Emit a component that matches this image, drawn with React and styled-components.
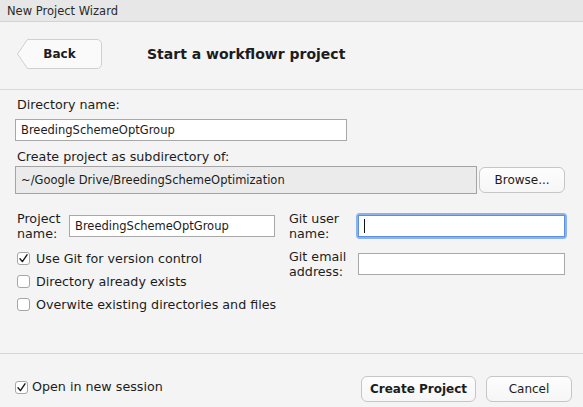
import React from 'react';
import styled, { createGlobalStyle } from 'styled-components';

const GlobalStyle = createGlobalStyle`
  html, body {
    margin: 0;
    padding: 0;
    background: #f4f4f4;
  }
  * {
    box-sizing: border-box;
  }
`;

const Window = styled.div`
  width: 583px;
  height: 407px;
  display: flex;
  flex-direction: column;
  background: #f4f4f4;
  color: #1c1c1c;
  font-family: "DejaVu Sans", "Liberation Sans", sans-serif;
  font-size: 12.7px;
  overflow: hidden;
`;

const TitleBar = styled.div`
  height: 22px;
  flex: none;
  display: flex;
  align-items: center;
  padding-left: 7px;
  background: #e7e7e7;
  border-bottom: 1px solid #d2d2d2;
  font-size: 11.5px;
  color: #2a2a2a;
`;

const Header = styled.div`
  height: 68px;
  flex: none;
  display: flex;
  align-items: flex-start;
  padding: 17px 0 0 17px;
  border-bottom: 1px solid #dadada;
`;

const BackButton = styled.button`
  position: relative;
  width: 85px;
  height: 30px;
  padding: 0;
  border: none;
  background: transparent;
  font-family: inherit;
  font-size: 12px;
  font-weight: bold;
  color: #1c1c1c;
  cursor: pointer;

  svg {
    position: absolute;
    left: 0;
    top: 0;
  }

  span {
    position: relative;
  }
`;

const Title = styled.h1`
  margin: 0 0 0 45px;
  height: 30px;
  display: flex;
  align-items: center;
  font-size: 14px;
  font-weight: bold;
`;

const Body = styled.div`
  flex: 1;
  display: flex;
  flex-direction: column;
  padding: 0 18px 0 15px;
`;

const Label = styled.div`
  line-height: 16px;
  padding-left: 2px;
  margin-top: ${({ $top }) => $top || 0}px;
`;

const TextInput = styled.input`
  display: block;
  width: ${({ $w }) => $w}px;
  height: 22px;
  margin-top: ${({ $top }) => $top || 0}px;
  padding: 0 5px;
  border: 1px solid ${({ $focus }) => ($focus ? '#5b8fdf' : '#a8a8a8')};
  border-radius: 0;
  background: #fff;
  font-family: inherit;
  font-size: 11.5px;
  color: #1c1c1c;
  outline: none;
`;

const PathRow = styled.div`
  display: flex;
  align-items: center;
  gap: 2px;
  margin-top: 1px;
`;

const PathField = styled.div`
  width: 463px;
  height: 28px;
  display: flex;
  align-items: center;
  padding-left: 5px;
  border: 1px solid #a4a4a4;
  background: #ebebeb;
  font-size: 11.5px;
`;

const PushButton = styled.button`
  width: ${({ $w }) => $w}px;
  height: ${({ $h }) => $h || 26}px;
  padding: 0;
  border: 1px solid #c6c6c6;
  border-radius: 6px;
  background: linear-gradient(#fdfdfd, #f6f6f6);
  font-family: inherit;
  font-size: 12px;
  font-weight: ${({ $bold }) => ($bold ? 'bold' : 'normal')};
  color: #1c1c1c;
  cursor: pointer;
`;

const Columns = styled.div`
  display: grid;
  grid-template-columns: 264px 276px;
  column-gap: 10px;
  margin-top: 20px;
`;

const Column = styled.div`
  display: flex;
  flex-direction: column;
`;

const FieldRow = styled.div`
  display: flex;
  align-items: center;
  height: 24px;
  margin-bottom: ${({ $gap }) => $gap || 0}px;
`;

const FieldLabel = styled.div`
  width: ${({ $w }) => $w}px;
  flex: none;
  line-height: 15px;
  padding-left: ${({ $pad }) => $pad || 0}px;
`;

const FocusWrap = styled.div`
  position: relative;
  border-radius: 2px;
  box-shadow: 0 0 0 2px rgba(104, 156, 232, 0.75);
`;

const Caret = styled.span`
  position: absolute;
  left: 6px;
  top: 4px;
  width: 1px;
  height: 14px;
  background: #111;
`;

const CheckRow = styled.label`
  display: flex;
  align-items: center;
  height: 23px;
  padding-left: 2px;
  gap: 6px;
  line-height: 16px;
`;

const Box = styled.span`
  width: 13px;
  height: 13px;
  flex: none;
  display: flex;
  align-items: center;
  justify-content: center;
  border: 1px solid #a6a6a6;
  border-radius: 3px;
  background: #fff;
`;

const Footer = styled.div`
  height: 54px;
  flex: none;
  display: flex;
  align-items: flex-start;
  justify-content: space-between;
  padding: 22px 11px 0 13px;
  border-top: 1px solid #d6d6d6;
`;

const FooterCheck = styled(CheckRow)`
  height: 16px;
  margin-top: 3px;
  gap: 4px;
`;

const ButtonGroup = styled.div`
  display: flex;
  gap: 10px;
`;

const Checkbox = ({ checked, children, as: Row = CheckRow }) => (
  <Row>
    <Box>
      {checked && (
        <svg width="11" height="11" viewBox="0 0 11 11">
          <path d="M2 5.8 L4.4 8.6 L9 1.8" fill="none" stroke="#1a1a1a" strokeWidth="1.4" strokeLinecap="round" strokeLinejoin="round" />
        </svg>
      )}
    </Box>
    <span>{children}</span>
  </Row>
);

const App = () => {
  return (
    <>
      <GlobalStyle />
      <Window>
        <TitleBar>New Project Wizard</TitleBar>
        <Header>
          <BackButton>
            <svg width="85" height="30" viewBox="0 0 85 30">
              <path
                d="M10.5 0.5 H80 A4.5 4.5 0 0 1 84.5 5 V25 A4.5 4.5 0 0 1 80 29.5 H10.5 L0.5 15 Z"
                fill="#fafafa"
                stroke="#cfcfcf"
              />
            </svg>
            <span>Back</span>
          </BackButton>
          <Title>Start a workflowr project</Title>
        </Header>

        <Body>
          <Label $top={7}>Directory name:</Label>
          <TextInput $w={332} $top={6} readOnly value="BreedingSchemeOptGroup" />
          <Label $top={8}>Create project as subdirectory of:</Label>
          <PathRow>
            <PathField>~/Google Drive/BreedingSchemeOptimization</PathField>
            <PushButton $w={86} $h={26}>Browse...</PushButton>
          </PathRow>

          <Columns>
            <Column>
              <FieldRow $gap={9}>
                <FieldLabel $w={54} $pad={2}>Project<br />name:</FieldLabel>
                <TextInput $w={206} readOnly value="BreedingSchemeOptGroup" />
              </FieldRow>
              <Checkbox checked>Use Git for version control</Checkbox>
              <Checkbox>Directory already exists</Checkbox>
              <Checkbox>Overwite existing directories and files</Checkbox>
            </Column>
            <Column>
              <FieldRow $gap={14}>
                <FieldLabel $w={69}>Git user<br />name:</FieldLabel>
                <FocusWrap>
                  <TextInput $w={207} $focus readOnly value="" />
                  <Caret />
                </FocusWrap>
              </FieldRow>
              <FieldRow>
                <FieldLabel $w={69}>Git email<br />address:</FieldLabel>
                <TextInput $w={207} readOnly value="" />
              </FieldRow>
            </Column>
          </Columns>
        </Body>

        <Footer>
          <Checkbox checked as={FooterCheck}>Open in new session</Checkbox>
          <ButtonGroup>
            <PushButton $w={115} $bold>Create Project</PushButton>
            <PushButton $w={86}>Cancel</PushButton>
          </ButtonGroup>
        </Footer>
      </Window>
    </>
  );
};

export default App;
